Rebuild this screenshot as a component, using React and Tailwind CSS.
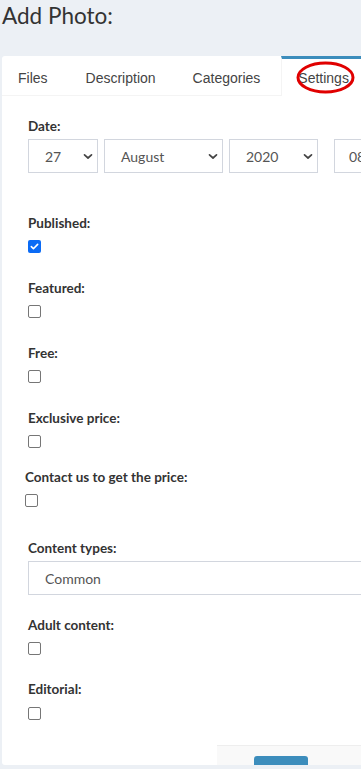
import React from "react";

const labelCls = "block text-[13.5px] font-bold leading-[18px] text-[#333] font-['Lato','Liberation_Sans',sans-serif]";

const Check = ({ checked, gap = "mt-[8px]" }) => (
    checked ? (
        <span className={`${gap} flex h-[13px] w-[13px] items-center justify-center rounded-[2px] bg-[#0b6bf5]`}>
            <svg width="9" height="9" viewBox="0 0 10 10" fill="none">
                <path d="M1.5 5.2l2.3 2.3L8.5 2.6" stroke="white" strokeWidth="1.8" strokeLinecap="round" strokeLinejoin="round" />
            </svg>
        </span>
    ) : (
        <span className={`${gap} block h-[13px] w-[13px] rounded-[2px] border border-[#767676] bg-white`} />
    )
);

const Chevron = () => (
    <svg width="10" height="7" viewBox="0 0 10 7" fill="none">
        <path d="M1.5 1.8l3.5 3.2 3.5-3.2" stroke="#444" strokeWidth="1.7" strokeLinecap="round" strokeLinejoin="round" />
    </svg>
);

const Select = ({ value, width }) => (
    <div className={`flex h-[34px] items-center justify-between border border-[#d2d6de] bg-white pl-[16px] pr-[4px] text-[14px] text-[#555] ${width}`}>
        <span>{value}</span>
        <Chevron />
    </div>
);

const Group = ({ label, checked, className = "", gap }) => (
    <div className={`flex flex-col ${className}`}>
        <span className={labelCls}>{label}</span>
        <Check checked={checked} gap={gap} />
    </div>
);

const App = () => {
    return (
        <div className="h-[769px] w-[361px] overflow-hidden bg-[#ecf0f5] font-['Lato','Liberation_Sans',sans-serif]">
            <h1 className="pl-[2px] pt-[2px] text-[22.5px] leading-[28px] text-[#333] font-['Lato',sans-serif]">Add Photo:</h1>
            <div className="relative ml-[2px] mt-[26px] w-[420px] rounded-[3px] bg-white">
                <div className="flex h-[40px] border-b border-[#f4f4f4] font-['Liberation_Sans',sans-serif] text-[14px] text-[#444]">
                    <div className="flex items-center pl-[16px] pr-[38px] pt-[5px]">Files</div>
                    <div className="flex items-center pr-[37px] pt-[5px]">Description</div>
                    <div className="flex items-center pr-[21px] pt-[5px]">Categories</div>
                    <div className="relative -mb-px flex items-center border-l border-t-[3px] border-l-[#f4f4f4] border-t-[#3c8dbc] bg-white pl-[16px] pr-[20px] pt-[2px]">
                        Settings
                        <svg className="absolute left-[14px] top-[2px]" width="59" height="33" viewBox="0 0 59 33" fill="none">
                            <ellipse cx="29.5" cy="16.5" rx="27.5" ry="14.5" stroke="#e00000" strokeWidth="3" />
                        </svg>
                    </div>
                </div>

                <div className="flex flex-col pl-[26px] pt-[21px] pb-[25px]">
                    <span className={labelCls}>Date:</span>
                    <div className="mt-[4px] flex gap-[6px]">
                        <Select value="27" width="w-[70px]" />
                        <Select value="August" width="w-[119px]" />
                        <Select value="2020" width="w-[89px]" />
                        <div className="ml-[10px] flex h-[34px] w-[80px] items-center border border-[#d2d6de] pl-[14px] text-[14px] text-[#555]">08</div>
                    </div>

                    <div className="mt-[41px] flex flex-col">
                        <Group label="Published:" checked />
                        <Group label="Featured:" className="mt-[26px]" />
                        <Group label="Free:" className="mt-[26px]" />
                        <Group label="Exclusive price:" className="mt-[26px]" />
                        <Group label="Contact us to get the price:" className="mt-[20px] -ml-[3px]" />
                    </div>

                    <div className="mt-[32px] flex flex-col">
                        <span className={labelCls}>Content types:</span>
                        <div className="mt-[4px] flex h-[34px] w-[380px] items-center border border-[#d2d6de] pl-[16px] text-[14px] text-[#555]">Common</div>
                    </div>

                    <div className="mt-[21px] flex flex-col">
                        <Group label="Adult content:" />
                        <Group label="Editorial:" className="mt-[25px]" gap="mt-[9px]" />
                    </div>
                </div>

                <div className="ml-[215px] flex h-[20px] items-end border-t border-[#eeeeee] bg-[#f9f9f9] pl-[37px]">
                    <div className="h-[9px] w-[54px] rounded-t-[3px] bg-[#3c8dbc]" />
                </div>
            </div>
        </div>
    );
};

export default App;
